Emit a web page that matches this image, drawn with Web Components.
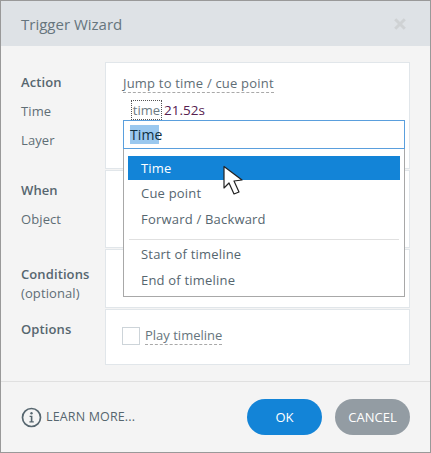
<!DOCTYPE html>
<html><head><meta charset="utf-8"><style>
html,body{margin:0;padding:0;background:#f4f4f4}
body{font:13px/18px "Open Sans","Noto Sans",sans-serif;color:#56666f;width:431px;height:453px;overflow:hidden}
</style></head><body>
<wizard-dialog>
  <span slot="title">Trigger Wizard</span>
  <wizard-section style="--h:107px;--pt:11px;--mb:1px">
    <div slot="label"><label-row bold>Action</label-row><label-row>Time</label-row><label-row>Layer</label-row></div>
    <action-body></action-body>
    <drop-menu slot="overlay"></drop-menu>
  </wizard-section>
  <wizard-section style="--h:78px;--pt:11px;--mb:1px">
    <div slot="label"><label-row bold>When</label-row><label-row>Object</label-row></div>
  </wizard-section>
  <wizard-section style="--h:59px;--pt:16px;--mb:1px">
    <div slot="label"><label-row bold h="19">Conditions</label-row><label-row h="19">(optional)</label-row></div>
  </wizard-section>
  <wizard-section style="--h:56px;--pt:11px;--mb:0px">
    <div slot="label"><label-row bold>Options</label-row></div>
    <play-option></play-option>
  </wizard-section>
  <info-link slot="footer-left"></info-link>
  <pill-button slot="footer-right" color="#1384d7">OK</pill-button>
  <pill-button slot="footer-right" color="#939ca3">CANCEL</pill-button>
</wizard-dialog>
<script>
function def(name, css, html, init){
  customElements.define(name, class extends HTMLElement{
    constructor(){super();const s=this.attachShadow({mode:'open'});s.innerHTML='<style>'+css+'</style>'+html;}
    connectedCallback(){ if(init) init(this); }
  });
}
def('wizard-dialog',`
:host{display:flex;flex-direction:column;box-sizing:border-box;width:431px;height:453px;border:1px solid #999;background:#f4f4f4}
header{height:45px;flex:none;background:#dee2e6;display:flex;align-items:center;justify-content:space-between;padding:0 24px 0 20px;box-sizing:border-box;font-size:15px;color:#66757d}
main{flex:none;height:335px;padding-top:16px;box-sizing:border-box;display:flex;flex-direction:column}
footer{flex:1;border-top:1px solid #e0e0e0;display:flex;align-items:flex-start;justify-content:space-between;padding:17px 20px 0 20px}
.r{display:flex;gap:13px}
svg{display:block}
`,`<header><slot name="title"></slot><svg width="12" height="12" viewBox="0 0 12 12"><path d="M1.2 1.2 10.8 10.8M10.8 1.2 1.2 10.8" stroke="#cfd2d4" stroke-width="3"/></svg></header>
<main><slot></slot></main>
<footer><slot name="footer-left"></slot><div class="r"><slot name="footer-right"></slot></div></footer>`);
def('wizard-section',`
:host{display:flex;flex:none;height:var(--h);margin-bottom:var(--mb);position:relative}
.l{width:104px;flex:none;padding:var(--pt) 0 0 20px;box-sizing:border-box}
.p{flex:none;width:305px;box-sizing:border-box;height:100%;background:#fff;border:1px solid #e1e6ea;padding:0}
`,`<div class="l"><slot name="label"></slot></div><div class="p"><slot></slot></div><slot name="overlay"></slot>`);
def('label-row',`
:host{display:block;height:29px;font-size:13px;line-height:18px;color:#5f6e76;letter-spacing:.1px}
:host([bold]){font-weight:600;color:#56666f}
:host([h="19"]){height:19px}
`,`<slot></slot>`);
def('action-body',`
:host{display:block;padding:11px 0 0 17px;font-size:13px;line-height:18px;color:#5f6e76;letter-spacing:.2px}
.j{display:inline-block;border-bottom:1px dashed #a9a9a9;height:18px;line-height:18px}
.t{display:flex;align-items:center;margin:7px 0 0 8px;height:20px}
.k{border:1px dotted #555;width:31px;height:20px;line-height:19px;text-align:center;box-sizing:border-box;letter-spacing:0;color:#6b7a82}
.v{color:#56204f;margin-left:2px;letter-spacing:0;font-size:13.5px}
`,`<span class="j">Jump to time / cue point</span><div class="t"><span class="k">time</span><span class="v">21.52s</span></div>`);
def('drop-menu',`
:host{display:block;position:absolute;left:122px;top:58px;width:282px;font-size:13px;letter-spacing:.2px;color:#56666f;z-index:2}
.i{height:29px;box-sizing:border-box;border:1px solid #5a9fdd;background:#fff;display:flex;align-items:center;padding-left:6px;color:#10303f;font-size:14px}
.i span{background:#9ac8ef;line-height:19px;height:19px;width:29px;letter-spacing:.1px}
.m{box-sizing:border-box;height:148px;background:#fff;border:solid #a8a8a8;border-width:0 1px 1px 1px;padding:7px 4px 0 4px;position:relative}
.o{height:26px;line-height:25px;padding-left:13px}
.s{height:24px;line-height:24px;background:#1384d7;color:#fff;margin-bottom:1px}
hr{border:0;height:1px;background:#e0e0e0;margin:6px 1px 2px 1px}
svg{position:absolute;left:98px;top:16px}
`,`<div class="i"><span>Time</span></div><div class="m">
<div class="o s">Time</div><div class="o">Cue point</div><div class="o">Forward / Backward</div><hr>
<div class="o">Start of timeline</div><div class="o">End of timeline</div>
<svg width="22" height="31" viewBox="0 0 22 31"><path d="M2 1.5V23L7 18 12 29 17 27 12 16 20 15Z" fill="#fff" stroke="#222" stroke-width="1.2" stroke-linejoin="round"/></svg></div>`);
def('play-option',`
:host{display:flex;align-items:center;gap:5px;padding:16px 0 0 16px;font-size:13px;color:#66757d}
i{display:block;width:18px;height:18px;box-sizing:border-box;border:1px solid #cdd4d9;background:#fff}
span{border-bottom:1px dashed #a9a9a9;line-height:18px;height:18px}
`,`<i></i><span>Play timeline</span>`);
def('info-link',`
:host{display:flex;align-items:center;gap:4px;font-size:12.5px;letter-spacing:.15px;color:#56666f;padding-top:7px;height:22px}
svg{display:block}
`,`<svg width="21" height="21" viewBox="0 0 21 21"><circle cx="10.5" cy="10.5" r="9" fill="none" stroke="#56666f" stroke-width="1.7"/><circle cx="10.5" cy="6.3" r="1.2" fill="#56666f"/><path d="M8.6 8.8H11.4V14.2H12.8V15.4H8.4V14.2H9.8V10H8.6Z" fill="#56666f"/></svg><span>LEARN MORE...</span>`);
def('pill-button',`
:host{display:block;width:75px;height:36px;border-radius:18px;text-align:center;line-height:36px;font-size:13px;color:#fff}
`,`<slot></slot>`,el=>{el.style.background=el.getAttribute('color')});
</script>
</body></html>
